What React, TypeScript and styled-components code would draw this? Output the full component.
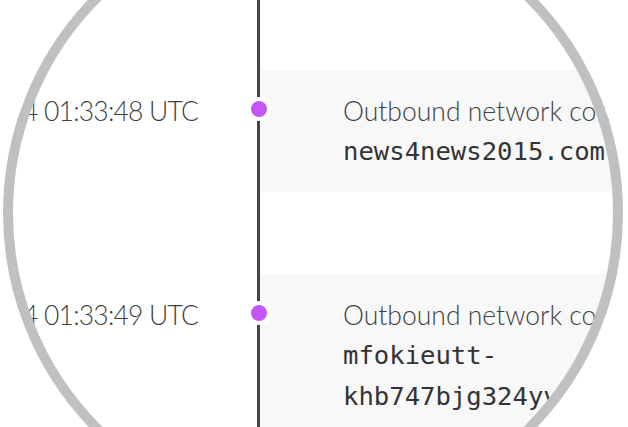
import React from "react";
import styled, { createGlobalStyle } from "styled-components";

const GlobalStyle = createGlobalStyle`
  html, body { margin: 0; padding: 0; background: #fff; }
  body { font-family: "Lato", "Noto Sans", sans-serif; overflow: hidden; }
`;

const Stage = styled.div`
  position: relative;
  width: 628px;
  height: 427px;
  overflow: hidden;
  background: #fff;
`;

const Timeline = styled.div`
  display: flex;
  flex-direction: column;
`;

const Row = styled.div`
  display: grid;
  grid-template-columns: 257px 3px 1fr;
`;

const Time = styled.div`
  display: flex;
  justify-content: flex-end;
  padding: 21px 59px 0 0;
  font-size: 26.5px;
  font-weight: 300;
  line-height: 40px;
  letter-spacing: -0.8px;
  color: #3f3f3f;
  white-space: nowrap;
`;

const Rail = styled.div`
  position: relative;
  background: #444;
`;

const Dot = styled.span`
  position: absolute;
  top: 27px;
  left: 50%;
  margin-left: -12px;
  width: 16px;
  height: 16px;
  border: 4px solid #fff;
  border-radius: 50%;
  background: #c455f7;
`;

const Body = styled.div`
  min-width: 0;
  overflow: hidden;
`;

const Spacer = styled.div<{ $h: number }>`
  height: ${(p) => p.$h}px;
`;

const Panel = styled.div<{ $gap: number }>`
  background: #f8f8f8;
  padding: 21px 0 20px 83px;
  margin-bottom: ${(p) => p.$gap}px;
`;

const Title = styled.div`
  font-size: 26.5px;
  font-weight: 300;
  line-height: 40px;
  color: #3f3f3f;
  white-space: nowrap;
`;

const Host = styled.div`
  font-family: "DejaVu Sans Mono", "Liberation Mono", monospace;
  font-size: 25.6px;
  line-height: 41px;
  color: #333;
`;

const Lens = styled.div`
  position: absolute;
  left: 3px;
  top: -97px;
  width: 620px;
  height: 620px;
  box-sizing: border-box;
  border: 10px solid #c0c0c0;
  border-radius: 50%;
  box-shadow: 0 0 0 700px #fff;
  pointer-events: none;
`;

const events = [
  { time: "2014 01:33:48 UTC", host: "news4news2015.com", gap: 82 },
  { time: "2014 01:33:49 UTC", host: "mfokieutt-khb747bjg324yv.com", gap: 0 },
];

export default function App() {
  return (
    <>
      <GlobalStyle />
      <Stage>
        <Timeline>
          <Row>
            <span />
            <Rail />
            <Spacer $h={70} />
          </Row>
          {events.map((e) => (
            <Row key={e.time}>
              <Time>{e.time}</Time>
              <Rail>
                <Dot />
              </Rail>
              <Body>
                <Panel $gap={e.gap}>
                  <Title>Outbound network connection</Title>
                  <Host>{e.host}</Host>
                </Panel>
              </Body>
            </Row>
          ))}
        </Timeline>
        <Lens />
      </Stage>
    </>
  );
}
